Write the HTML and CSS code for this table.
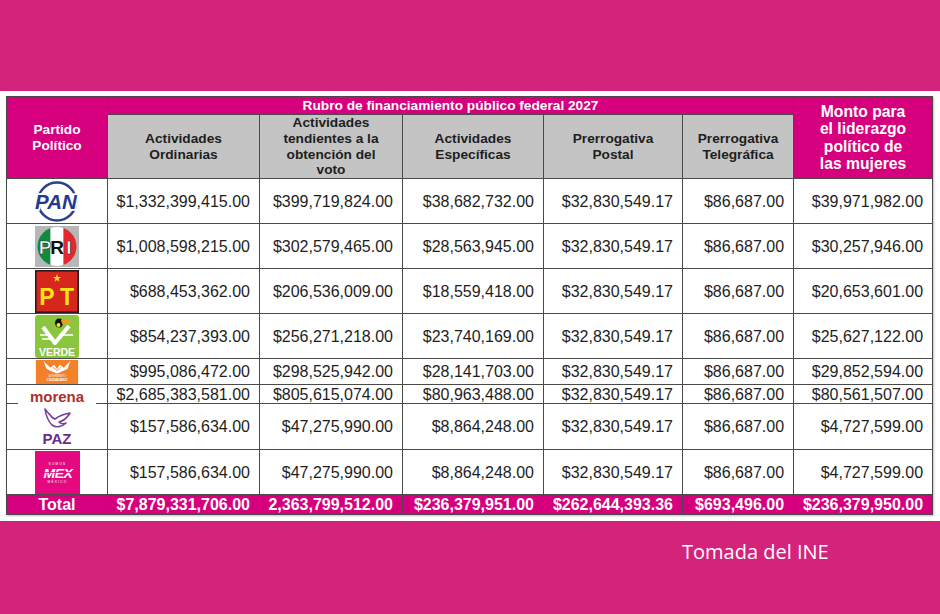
FILE: index.html
```html
<!DOCTYPE html>
<html lang="es">
<head>
<meta charset="utf-8">
<title>Financiamiento público federal 2027</title>
<link rel="stylesheet" href="styles.css">
</head>
<body>
<div class="band band-top"></div>
<main class="sheet">
<table class="fin">
<colgroup>
<col class="c1"><col class="c2"><col class="c3"><col class="c4"><col class="c5"><col class="c6"><col class="c7">
</colgroup>
<thead>
<tr class="r-rubro">
<th class="h-pink" rowspan="2">Partido<br>Político</th>
<th class="h-pink h-rubro" colspan="5">Rubro de financiamiento público federal 2027</th>
<th class="h-pink h-monto" rowspan="2">Monto para<br>el liderazgo<br>político de<br>las mujeres</th>
</tr>
<tr class="r-sub">
<th class="h-gray">Actividades<br>Ordinarias</th>
<th class="h-gray">Actividades<br>tendientes a la<br>obtención del<br>voto</th>
<th class="h-gray">Actividades<br>Específicas</th>
<th class="h-gray">Prerrogativa<br>Postal</th>
<th class="h-gray">Prerrogativa<br>Telegráfica</th>
</tr>
</thead>
<tbody>
<tr class="r45">
<td class="logo">
<svg class="lg" width="52" height="43" viewBox="0 0 52 44"><circle cx="26" cy="22" r="19.5" fill="none" stroke="#2c4090" stroke-width="2.6"/><text x="25" y="30" text-anchor="middle" font-family="Liberation Sans, Arial, sans-serif" font-weight="bold" font-style="italic" font-size="21" fill="#243a8c" stroke="#fff" stroke-width="3.5" paint-order="stroke">PAN</text></svg>
</td>
<td class="num">$1,332,399,415.00</td><td class="num">$399,719,824.00</td><td class="num">$38,682,732.00</td><td class="num">$32,830,549.17</td><td class="num">$86,687.00</td><td class="num">$39,971,982.00</td>
</tr>
<tr class="r45">
<td class="logo">
<svg class="lg" width="44" height="41" viewBox="0 0 44 41"><defs><clipPath id="pri"><circle cx="22" cy="20.5" r="19.5"/></clipPath></defs><rect width="44" height="41" fill="#b7b7b7"/><g clip-path="url(#pri)"><rect x="0" y="0" width="15.5" height="41" fill="#0e8b3f"/><rect x="15.5" y="0" width="13" height="41" fill="#fff"/><rect x="28.5" y="0" width="15.5" height="41" fill="#e2282c"/></g><g font-family="Liberation Sans, Arial, sans-serif" font-weight="bold" font-size="19" text-anchor="middle"><text x="10" y="28" fill="#fff" stroke="#333" stroke-width="0.6">P</text><text x="22" y="28" fill="#111">R</text><text x="34" y="28" fill="#fff" stroke="#333" stroke-width="0.6">I</text></g></svg>
</td>
<td class="num">$1,008,598,215.00</td><td class="num">$302,579,465.00</td><td class="num">$28,563,945.00</td><td class="num">$32,830,549.17</td><td class="num">$86,687.00</td><td class="num">$30,257,946.00</td>
</tr>
<tr class="r45">
<td class="logo">
<svg class="lg" width="44" height="43" viewBox="0 0 44 43"><rect x="0.8" y="0.8" width="42.4" height="41.4" fill="#d7261e" stroke="#2b1b1b" stroke-width="1.6"/><polygon points="22,4 23,7 26,7 23.6,8.8 24.5,11.8 22,10 19.5,11.8 20.4,8.8 18,7 21,7" fill="#f6e01a"/><g font-family="Liberation Sans, Arial, sans-serif" font-weight="bold" font-size="23" fill="#f6e01a" text-anchor="middle"><text x="12" y="35">P</text><text x="32" y="35">T</text></g></svg>
</td>
<td class="num">$688,453,362.00</td><td class="num">$206,536,009.00</td><td class="num">$18,559,418.00</td><td class="num">$32,830,549.17</td><td class="num">$86,687.00</td><td class="num">$20,653,601.00</td>
</tr>
<tr class="r45">
<td class="logo">
<svg class="lg" width="44" height="43" viewBox="0 0 44 43"><rect width="44" height="43" rx="3" fill="#8cc540"/><path d="M8 12 L20 28 L34 11" fill="none" stroke="#fff" stroke-width="4" stroke-linejoin="round"/><path d="M5 20 H15 M24 20 H38 M7 24 H17" stroke="#fff" stroke-width="1.6"/><ellipse cx="24" cy="8" rx="4" ry="4.5" fill="#111"/><path d="M26 5 Q34 3 37 8 Q31 7 27 9 Z" fill="#f29a1f"/><ellipse cx="23.5" cy="10" rx="2" ry="2" fill="#f5e62a"/><text x="22" y="40.5" text-anchor="middle" font-family="Liberation Sans, Arial, sans-serif" font-weight="bold" font-size="10.5" fill="#fff">VERDE</text></svg>
</td>
<td class="num">$854,237,393.00</td><td class="num">$256,271,218.00</td><td class="num">$23,740,169.00</td><td class="num">$32,830,549.17</td><td class="num">$86,687.00</td><td class="num">$25,627,122.00</td>
</tr>
<tr class="r26">
<td class="logo">
<svg class="lg" width="44" height="24" viewBox="0 0 44 25"><rect width="44" height="25" fill="#f4802a"/><path d="M8 1 L15 8 L19 5 L22 9 L25 5 L29 8 L36 1 L33 9 L26 12.5 L22 14 L18 12.5 L11 9 Z" fill="#fff"/><path d="M18 7.5 L22 11 L26 7.5" fill="none" stroke="#f4802a" stroke-width="0.9"/><text x="22" y="18" text-anchor="middle" font-family="Liberation Sans, Arial, sans-serif" font-size="2.8" fill="#fff">MOVIMIENTO</text><text x="22" y="22" text-anchor="middle" font-family="Liberation Sans, Arial, sans-serif" font-weight="bold" font-size="3.6" fill="#fff">CIUDADANO</text></svg>
</td>
<td class="num">$995,086,472.00</td><td class="num">$298,525,942.00</td><td class="num">$28,141,703.00</td><td class="num">$32,830,549.17</td><td class="num">$86,687.00</td><td class="num">$29,852,594.00</td>
</tr>
<tr class="r18">
<td class="logo logo-morena"><span class="morena">morena</span></td>
<td class="num">$2,685,383,581.00</td><td class="num">$805,615,074.00</td><td class="num">$80,963,488.00</td><td class="num">$32,830,549.17</td><td class="num">$86,687.00</td><td class="num">$80,561,507.00</td>
</tr>
<tr class="r46">
<td class="logo">
<svg class="lg" width="34" height="40" viewBox="0 0 34 40"><path d="M5 2 C9 7 11 10 15 12 C19 9 24 7 30 6 C27 11 23 14 19 15 C21 17 24 17 26 16 C22 20 16 21 12 18 C9 15 6 9 5 2 Z" fill="none" stroke="#7b3f9b" stroke-width="1.6" stroke-linejoin="round"/><path d="M9 6 C11 10 13 12 15 12" fill="none" stroke="#7b3f9b" stroke-width="1.2"/><text x="17" y="37" text-anchor="middle" font-family="Liberation Sans, Arial, sans-serif" font-weight="bold" font-size="15" fill="#6a2c8e">PAZ</text></svg>
</td>
<td class="num">$157,586,634.00</td><td class="num">$47,275,990.00</td><td class="num">$8,864,248.00</td><td class="num">$32,830,549.17</td><td class="num">$86,687.00</td><td class="num">$4,727,599.00</td>
</tr>
<tr class="r45">
<td class="logo">
<svg class="lg" width="45" height="43" viewBox="0 0 45 45" preserveAspectRatio="none"><rect width="45" height="45" fill="#e5097f"/><text x="22.5" y="15" text-anchor="middle" font-family="Liberation Sans, Arial, sans-serif" font-size="3.2" letter-spacing="1.2" fill="#fff">SOMOS</text><text x="23" y="28" text-anchor="middle" font-family="Liberation Sans, Arial, sans-serif" font-weight="bold" font-style="italic" font-size="14" letter-spacing="-0.5" fill="#fff">MEX</text><path d="M9 22.5 H37" stroke="#e5097f" stroke-width="0.8"/><text x="22.5" y="33" text-anchor="middle" font-family="Liberation Sans, Arial, sans-serif" font-size="3.2" letter-spacing="1.2" fill="#fff">MÉXICO</text></svg>
</td>
<td class="num">$157,586,634.00</td><td class="num">$47,275,990.00</td><td class="num">$8,864,248.00</td><td class="num">$32,830,549.17</td><td class="num">$86,687.00</td><td class="num">$4,727,599.00</td>
</tr>
<tr class="total">
<td class="total-label">Total</td>
<td class="num">$7,879,331,706.00</td><td class="num">2,363,799,512.00</td><td class="num">$236,379,951.00</td><td class="num">$262,644,393.36</td><td class="num">$693,496.00</td><td class="num">$236,379,950.00</td>
</tr>
</tbody>
</table>
</main>
<footer class="band band-bottom"><span class="credit">Tomada del INE</span></footer>
</body>
</html>
```
FILE: styles.css
```css
* { box-sizing: border-box; }

body {
  margin: 0;
  width: 940px;
  height: 614px;
  overflow: hidden;
  background: #fff;
  font-family: "Liberation Sans", Arial, sans-serif;
}

.band { background: #d4237a; }
.band-top { height: 91px; }
.band-bottom {
  height: 93px;
  padding: 17px 0 0 682px;
}
.credit {
  font-family: "Open Sans", sans-serif;
  font-size: 20px;
  line-height: 27px;
  color: #fff;
}

.sheet {
  height: 430px;
  padding: 5px 0 0 6px;
}

.fin {
  border-collapse: collapse;
  table-layout: fixed;
  width: 926px;
  box-shadow: 1px 1px 2px rgba(0,0,0,0.25);
}
.c1 { width: 101px; }
.c2 { width: 152px; }
.c3 { width: 143px; }
.c4 { width: 141px; }
.c5 { width: 139px; }
.c6 { width: 111px; }
.c7 { width: 139px; }

.fin th, .fin td {
  border: 1px solid #4a4a4a;
  padding: 0 9px;
}

.fin th {
  font-size: 13.7px;
  line-height: 15.6px;
  font-weight: bold;
  text-align: center;
  vertical-align: middle;
}
.h-pink { background: #d6007e; color: #fff; }
.h-gray { background: #c4c4c4; color: #1e1e1e; }
.fin th.h-monto { font-size: 15.7px; line-height: 17.5px; padding: 0 4px; }

.r-rubro th { height: 18px; }
.r-sub th { height: 64px; }

.r45 td { height: 45px; }
.r46 td { height: 46px; }
.r26 td { height: 26px; }
.r18 td { height: 17px; }

.num {
  text-align: right;
  font-size: 16px;
  line-height: 17px;
  color: #1e1e1e;
  white-space: nowrap;
}
.fin td.num { padding: 0 9px 0 2px; }

.fin td.logo {
  padding: 0;
  text-align: center;
  vertical-align: middle;
}
.lg { display: block; margin: 0 auto; }

.logo-morena { position: relative; }
.morena {
  position: relative;
  top: 3px;
  display: inline-block;
  padding: 0 12px;
  background: #fff;
  color: #ad2f29;
  font-weight: bold;
  font-size: 15px;
  line-height: 14px;
}

.total td {
  height: 20px;
  background: #d6007e;
  color: #fff;
  font-weight: bold;
}
.total .total-label {
  text-align: center;
  font-size: 16px;
}
```
